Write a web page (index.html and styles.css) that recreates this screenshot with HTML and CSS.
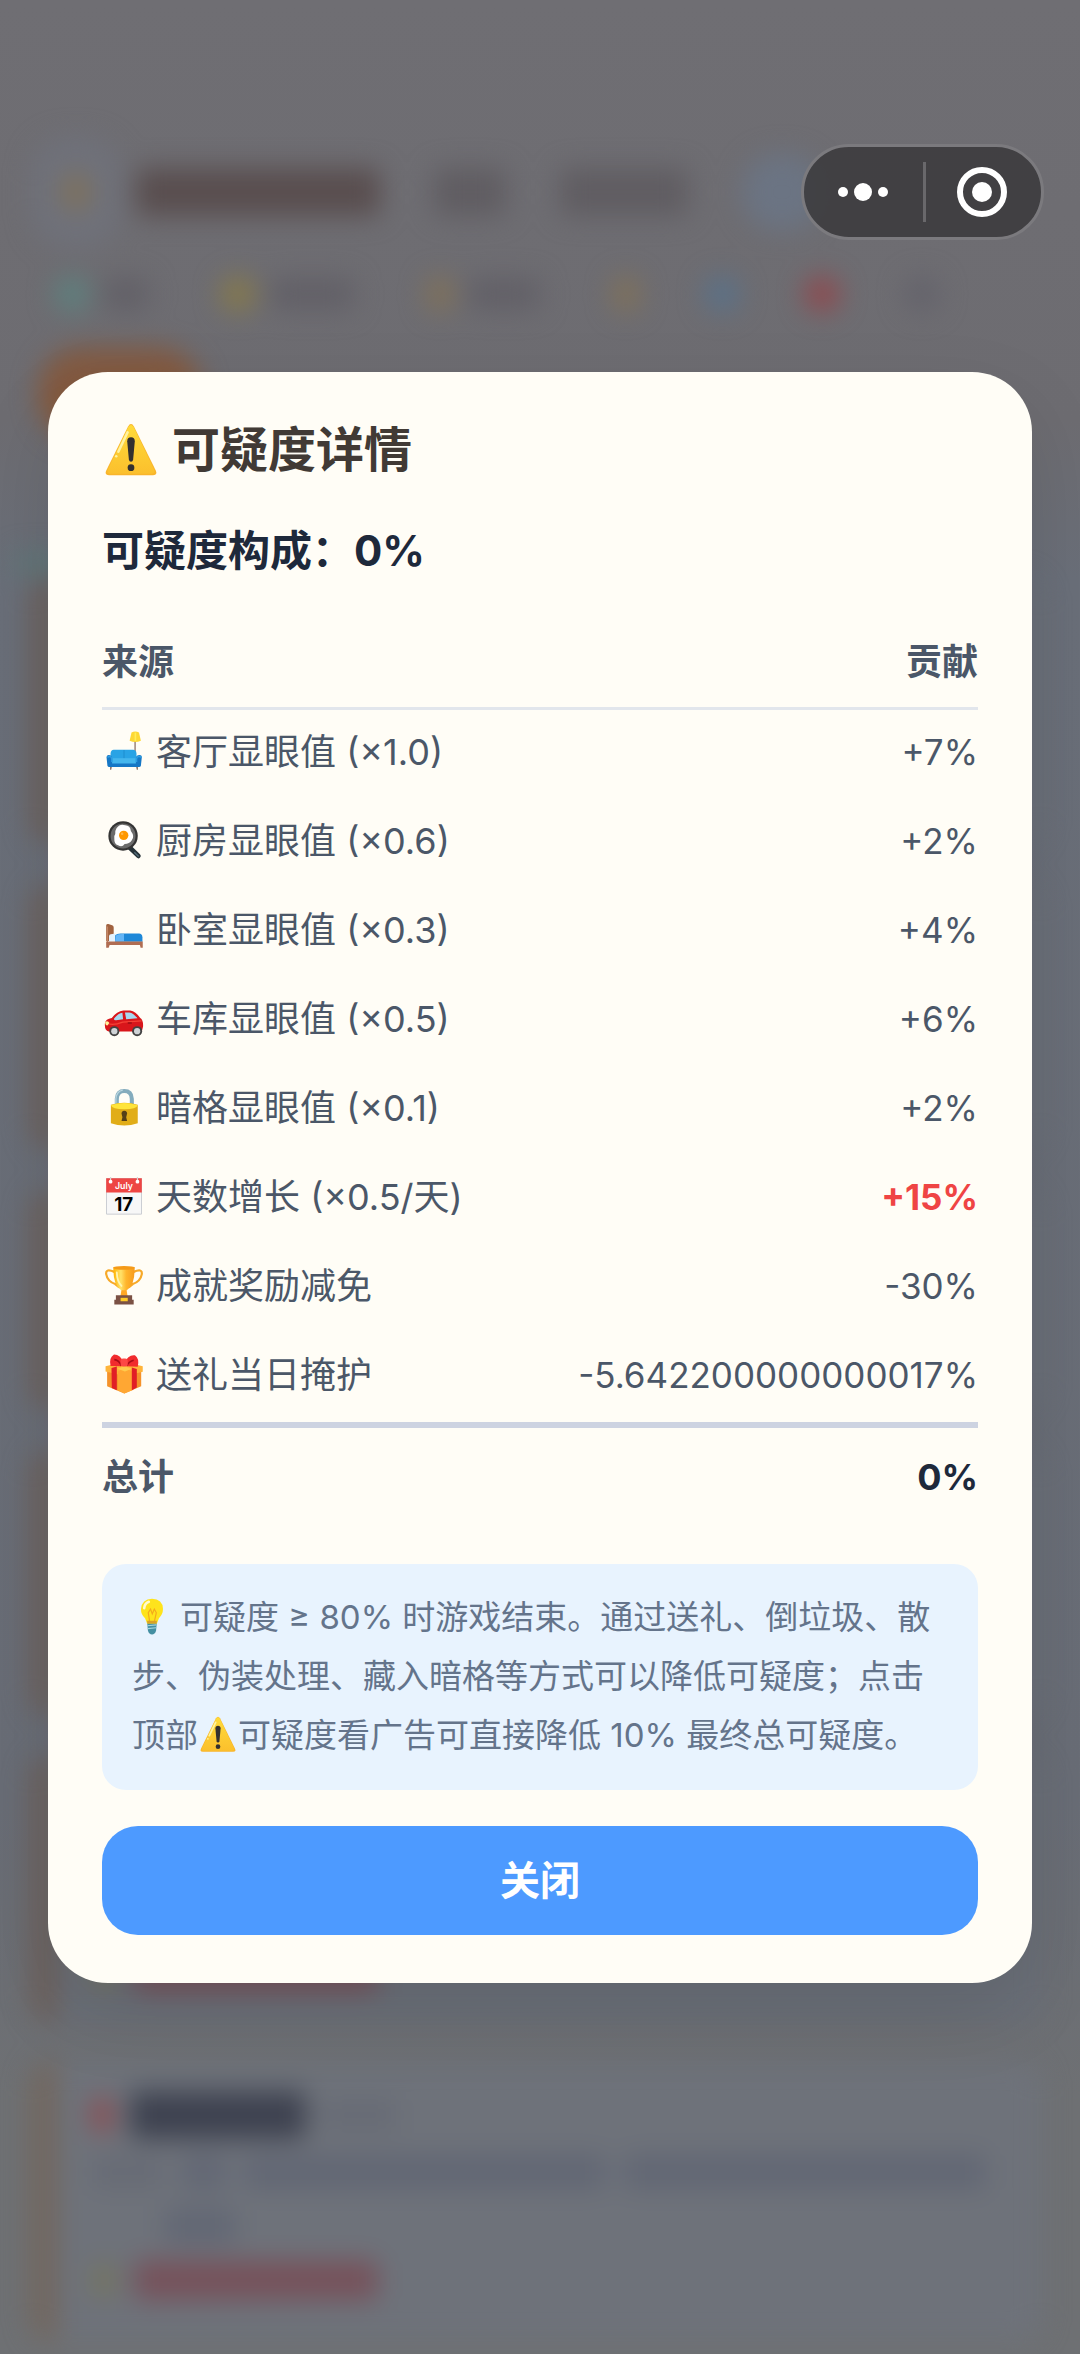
FILE: index.html
```html
<!DOCTYPE html>
<html lang="zh-CN">
<head>
<meta charset="utf-8">
<meta name="viewport" content="width=device-width, initial-scale=1">
<title>可疑度详情</title>
<link rel="stylesheet" href="styles.css">
</head>
<body>
<svg class="sprite" aria-hidden="true">
  <defs>
    <linearGradient id="gold" x1="0" y1="0" x2="0" y2="1"><stop offset="0" stop-color="#ffdb3a"/><stop offset="1" stop-color="#fbc02d"/></linearGradient>
    <linearGradient id="cup" x1="0" y1="0" x2="1" y2="0"><stop offset="0" stop-color="#ffb300"/><stop offset=".35" stop-color="#ffe26a"/><stop offset=".6" stop-color="#ffb62d"/><stop offset="1" stop-color="#f79a1c"/></linearGradient>
  </defs>
  <symbol id="warning" viewBox="0 0 128 128">
    <path d="M57 8Q64-3 71 8l52 105q4 11-7 11H12q-11 0-7-11z" fill="#f9b52b"/>
    <path d="M58 9Q64 0 70 9l49 102q3 9-6 9H14q-8 0-5-9z" fill="url(#gold)"/>
    <path d="M56 22 34 68" stroke="#fff3a0" stroke-width="6" stroke-linecap="round"/><circle cx="29" cy="79" r="3" fill="#fff3a0"/>
    <path d="M55 43q0-9 9-9t9 9l-4 44q-1 5-5 5t-5-5z" fill="#33302f"/><circle cx="64" cy="106" r="8" fill="#33302f"/>
  </symbol>
  <symbol id="sofa" viewBox="0 0 128 128">
    <path d="M97 28h5v50h-5z" fill="#a1887f"/><path d="M88 5q12-7 24 0l6 26q-18 8-36 0z" fill="#fdd835"/><path d="M98 5h5v27h-5z" fill="#ffee58"/>
    <path d="M20 112h5l-2 12h-3zM103 112h5v12h-3z" fill="#6d4c41"/>
    <path d="M21 72q1-12 10-12h62q10 0 11 12v28H21z" fill="#29a3e5"/><path d="M64 61v28" stroke="#1680c2" stroke-width="2"/>
    <path d="M25 87h79v24H25z" fill="#45b6ed"/><path d="M8 83q1-6 7-6 10 0 11 10v17h76V87q1-10 12-10 7 0 7 7l-3 27q-1 4-6 4H17q-5 0-6-4z" fill="#1677c5"/>
    <path d="M11 84q11-7 14 5v10M120 84q-12-7-16 5v10" fill="none" stroke="#2c9de2" stroke-width="5"/>
  </symbol>
  <symbol id="pan" viewBox="0 0 128 128">
    <path d="m78 84 32 31" stroke="#263238" stroke-width="15" stroke-linecap="round"/><path d="m97 103 14 14" stroke="#546e7a" stroke-width="4"/>
    <circle cx="61" cy="51" r="47" fill="#343434"/><circle cx="61" cy="51" r="40" fill="#6b6b6b"/><path d="M40 26Q52 10 68 17q16 1 18 18 13 17 3 30-8 12-23 12-8 12-21 4-13-4-12-21-2-9 3-15-1-12 4-19" fill="#fff"/>
    <circle cx="63" cy="49" r="15" fill="#ff9800"/><circle cx="58" cy="44" r="4" fill="#ffb74d"/>
  </symbol>
  <symbol id="bed" viewBox="0 0 128 128">
    <path d="M7 52q1-5 7-4l12 4q5 1 5 7v43H7z" fill="#a1623f"/><path d="M11 56v58" stroke="#c58563" stroke-width="4"/>
    <path d="M16 85q3-7 20-6l12 3v22H16z" fill="#e3f2fd"/><path d="M36 84q5-6 17-6h59q10 0 11 12v15H35z" fill="#1e88d8"/><path d="M39 84q8-5 25-4v24H35z" fill="#64b5f6"/>
    <path d="M7 104h117v20h-7l-2-9H18l-3 9H7z" fill="#b06d52"/>
  </symbol>
  <symbol id="car" viewBox="0 0 128 128">
    <path d="M3 81q2-14 22-17Q41 42 62 40h22q17 2 32 24 10 6 9 27l-4 16H15Q1 104 3 81z" fill="#d9161b"/>
    <path d="M32 66q13-17 27-19l2 21-22 3q-8 1-7-5zM67 46h14q14 2 26 19l-36 3z" fill="#a8d8ef"/><path d="M6 80q21 10 54-3l60-4" fill="none" stroke="#f44336" stroke-width="4"/>
    <path d="M4 76q9-5 13 4l-6 8q-8-1-7-12z" fill="#fff59d"/><path d="M76 80h13" stroke="#8d0c12" stroke-width="4"/>
    <circle cx="33" cy="106" r="16" fill="#424242"/><circle cx="106" cy="106" r="16" fill="#424242"/><circle cx="33" cy="106" r="10" fill="#cfd3d6"/><circle cx="106" cy="106" r="10" fill="#cfd3d6"/>
  </symbol>
  <symbol id="lock" viewBox="0 0 128 128">
    <path d="M41 67V38q1-25 24-25t24 25v29" fill="none" stroke="#84acbd" stroke-width="13"/><path d="M38 61V37Q41 13 60 10" fill="none" stroke="#b8d5df" stroke-width="4"/>
    <path d="M22 57q43-14 86 0v59q-43 14-86 0z" fill="#e1ad18"/><path d="M22 58q43-14 86 0-4 13-43 13T22 58z" fill="#ffe43a"/>
    <path d="M57 89a9 9 0 1 1 16 0l-2 8 3 12H56l3-12z" fill="#554018"/>
  </symbol>
  <symbol id="trophy" viewBox="0 0 128 128">
    <path d="M33 22Q5 10 7 29q4 23 29 32l13 11M95 22q28-12 26 7-4 23-29 32L79 72" fill="none" stroke="#f7a928" stroke-width="7"/>
    <path d="M57 73h14l5 30H52z" fill="#ffa726"/><path d="M30 8h68q1 58-25 73H55Q29 66 30 8z" fill="url(#cup)"/><ellipse cx="64" cy="9" rx="35" ry="6" fill="#f59a18"/><path d="M41 24q1 29 15 43" fill="none" stroke="#fff4b0" stroke-width="6" stroke-linecap="round"/>
    <path d="M38 97h52v14h5v15H33v-15h5z" fill="#7b5144"/><path d="M53 105h23v11H53z" fill="#ffca28"/>
  </symbol>
  <symbol id="gift" viewBox="0 0 128 128">
    <path d="m10 53 55-16 54 16v50l-54 23-55-23z" fill="#f5922a"/><path d="m5 39 59-14 60 14v18L67 70 5 56z" fill="#ffb43a"/><path d="m44 56 22-11 25 11v60l-26 10-21-10z" fill="#ffa733"/>
    <path d="m24 45 17-5v76l-16-7zM89 43l16 5v59l-16 9z" fill="#e11f26"/><path d="m43 47 22-8 24 8-22 9z" fill="#ffcb4d"/>
    <path d="M63 28Q52 1 31 2 15 12 21 38l34 1zM66 28Q77 1 99 4q15 10 9 37l-35-2z" fill="#f12b2d"/><path d="M33 18q14 1 23 20M95 20Q81 23 72 38" fill="none" stroke="#a90d15" stroke-width="5"/><rect x="53" y="14" width="23" height="26" rx="8" fill="#fc4845"/>
  </symbol>
  <symbol id="bulb" viewBox="0 0 128 128">
    <path d="M47 82h34l-3 31q-4 13-14 13t-14-13z" fill="#448fa2"/><path d="m48 96 31-3M49 106l29-3" stroke="#a4d5df" stroke-width="4"/>
    <path d="M64 3q37 1 38 35 0 18-14 32l-7 18H47l-7-18Q25 56 26 38 29 4 64 3z" fill="#fee31c"/><path d="M37 35q1-16 16-22" fill="none" stroke="#fffbd0" stroke-width="9" stroke-linecap="round"/>
    <path d="m56 82-5-31 8-13 6 17 7-17 7 13-7 31" fill="none" stroke="#f4a91c" stroke-width="4"/><path d="M47 79h34l-1 9H48z" fill="#d9a128"/>
  </symbol>
</svg>

<div class="backdrop" aria-hidden="true">
  <div class="bar bar-top">
    <span class="avatar"><i class="dot gold"></i></span>
    <i class="smear w-title brown"></i><i class="smear w-sm"></i><i class="smear w-md"></i><i class="pill-blue"></i>
  </div>
  <div class="bar bar-stats">
    <i class="dot teal"></i><i class="smear w-xs thin"></i>
    <i class="dot yellow push"></i><i class="smear w-lg thin"></i>
    <i class="dot gold push"></i><i class="smear w-sm thin"></i>
    <i class="dot gold push"></i><i class="dot blue push"></i><i class="dot red push"></i><i class="dot grey push"></i>
  </div>
  <div class="tab"></div>
  <div class="rule"></div>
  <div class="log">
    <div class="entry"></div>
    <div class="entry"></div>
    <div class="entry short"></div>
    <div class="entry"></div>
    <div class="entry end"><div class="line"><i class="dot olive"></i><i class="smear w-title rose"></i></div></div>
    <div class="entry light">
      <div class="line head"><i class="dot red slim"></i><i class="smear ink w-head"></i><i class="smear w-sm faint"></i></div>
      <div class="line"><i class="smear w-sm faint"></i><i class="smear slate w-xs"></i><i class="smear slate grow"></i><i class="smear slate grow"></i></div>
      <div class="line indent"><i class="smear slate w-sm"></i></div>
      <div class="line"><i class="dot olive"></i><i class="smear w-title rose"></i></div>
    </div>
  </div>
</div>

<main class="overlay">
  <section class="modal" role="dialog" aria-modal="true" aria-labelledby="dialog-title">
    <h1 class="title" id="dialog-title"><svg class="emoji"><use href="#warning"/></svg>可疑度详情</h1>
    <h2 class="subtitle">可疑度构成：0%</h2>
    <table class="sources">
      <thead><tr><th scope="col">来源</th><th scope="col">贡献</th></tr></thead>
      <tbody>
        <tr><td><svg class="emoji"><use href="#sofa"/></svg>客厅显眼值 (×1.0)</td><td>+7%</td></tr>
        <tr><td><svg class="emoji"><use href="#pan"/></svg>厨房显眼值 (×0.6)</td><td>+2%</td></tr>
        <tr><td><svg class="emoji"><use href="#bed"/></svg>卧室显眼值 (×0.3)</td><td>+4%</td></tr>
        <tr><td><svg class="emoji"><use href="#car"/></svg>车库显眼值 (×0.5)</td><td>+6%</td></tr>
        <tr><td><svg class="emoji"><use href="#lock"/></svg>暗格显眼值 (×0.1)</td><td>+2%</td></tr>
        <tr><td><svg class="emoji" viewBox="0 0 128 128"><path d="M8 8h112v114H8z" fill="#f7f7f7" stroke="#c8cbd0" stroke-width="3"/><path d="M7 7h114v46H7z" fill="#ee4644"/><path d="M21 3v13M107 3v13" stroke="#d6d6d6" stroke-width="4"/><circle cx="21" cy="18" r="6" fill="#fff"/><circle cx="107" cy="18" r="6" fill="#fff"/><text x="64" y="43" text-anchor="middle" class="cal-month">July</text><text x="63" y="111" text-anchor="middle" class="cal-day">17</text></svg>天数增长 (×0.5/天)</td><td class="high">+15%</td></tr>
        <tr><td><svg class="emoji"><use href="#trophy"/></svg>成就奖励减免</td><td>-30%</td></tr>
        <tr><td><svg class="emoji"><use href="#gift"/></svg>送礼当日掩护</td><td>-5.642200000000017%</td></tr>
      </tbody>
      <tfoot><tr><th scope="row">总计</th><td>0%</td></tr></tfoot>
    </table>
    <p class="note"><svg class="emoji lead"><use href="#bulb"/></svg>可疑度 ≥ 80% 时游戏结束。通过送礼、倒垃圾、散步、伪装处理、藏入暗格等方式可以降低可疑度；点击顶部<svg class="emoji"><use href="#warning"/></svg>可疑度看广告可直接降低 10% 最终总可疑度。</p>
    <button class="close" type="button">关闭</button>
  </section>
</main>

<div class="capsule">
  <button type="button" aria-label="更多"><svg viewBox="0 0 50 50"><circle cx="5" cy="25" r="5"/><circle cx="25" cy="25" r="9"/><circle cx="45" cy="25" r="5"/></svg></button>
  <button type="button" aria-label="退出"><svg viewBox="0 0 50 50"><circle cx="25" cy="25" r="22" class="ring"/><circle cx="25" cy="25" r="10"/></svg></button>
</div>
</body>
</html>
```
FILE: styles.css
```css
* { box-sizing: border-box; }

body {
  margin: 0;
  min-height: 100vh;
  position: relative;
  background: linear-gradient(#6f6e73 0, #6d6c71 420px, #6a6f79 580px, #696d76 1800px, #6e7073 2100px, #6e7073 100%);
  color: #4b5768;
  font-family: Inter, "Noto Sans CJK SC", sans-serif;
  font-size: 36px;
}

.sprite { position: absolute; width: 0; height: 0; }
.cal-month { font: 600 28px Inter, sans-serif; fill: #fff; }
.cal-day { font: 700 60px Inter, sans-serif; fill: #000; }

/* Game screen behind the dialog, out of focus */
.backdrop {
  position: absolute;
  inset: 0;
  overflow: hidden;
  padding-top: 135px;
  filter: blur(13px);
}
.bar { display: flex; align-items: center; padding: 0 32px; }
.bar-top { height: 114px; gap: 54px; }
.bar-stats { height: 90px; gap: 14px; padding-left: 54px; }
.avatar { display: flex; align-items: center; justify-content: center; width: 88px; height: 110px; margin-right: -38px; border-radius: 36px; background: #6f717a; }
.smear { display: block; height: 48px; border-radius: 8px; background: #605d62; }
.thin { height: 32px; background: #626067; }
.brown { background: #594e4f; }
.rose { background: #76525b; height: 40px; }
.ink { background: #3e4250; }
.slate { background: #626774; height: 36px; }
.faint { background: #676b75; height: 32px; }
.w-xs { width: 44px; }
.w-sm { width: 72px; }
.w-md { width: 128px; }
.w-lg { width: 84px; }
.w-head { width: 176px; }
.w-title { width: 244px; }
.grow { flex: 1; }
.pill-blue { width: 80px; height: 76px; border-radius: 36px; background: #6b7483; }
.dot { display: block; flex: none; width: 36px; height: 36px; border-radius: 18px; }
.push { margin-left: 58px; }
.slim { width: 20px; }
.gold { width: 28px; background: #807159; }
.teal { background: #5e807e; }
.yellow { background: #85794c; }
.blue { background: #5a7188; }
.dot + .dot.push { margin-left: 50px; }
.red { background: #8e4a4f; }
.grey { background: #64636b; }
.olive { width: 24px; background: #75745f; }
.tab { width: 164px; height: 94px; margin: 8px 0 0 38px; border-radius: 44px; background: linear-gradient(#815a43, #87593a); }
.rule { width: 50%; height: 20px; margin: 112px 0 0 14px; background: #5f7778; }
.log { display: flex; flex-direction: column; gap: 38px; padding: 4px 38px 0 30px; }
.entry { height: 268px; padding: 24px 56px 24px 34px; border-radius: 24px; border-left: 28px solid #6c615d; background: #6a6f78; }
.entry.short { height: 222px; }
.entry.end { display: flex; flex-direction: column; justify-content: flex-end; }
.entry.light { height: 280px; background: #6e727a; border-left-color: #72675f; }
.line { display: flex; align-items: center; gap: 18px; height: 54px; }
.head { height: 60px; }
.indent { padding-left: 72px; }

/* Dialog */
.overlay {
  position: relative;
  display: flex;
  align-items: center;
  min-height: 100vh;
  padding: 48px;
}
.modal {
  flex: 1;
  padding: 50px 54px 48px;
  border-radius: 60px;
  background: #fffdf6;
  box-shadow: 0 30px 80px rgba(0, 0, 0, 0.1);
}
.emoji { width: 44px; height: 40px; vertical-align: -6px; }
.title {
  display: flex;
  align-items: center;
  gap: 12px;
  margin: 0 0 48px;
  color: #413a35;
  font-size: 48px;
  line-height: 56px;
}
.title .emoji { width: 58px; height: 54px; }
.subtitle { margin: 0 0 41px; color: #1e293b; font-size: 42px; line-height: 50px; }

.sources { width: 100%; border-collapse: separate; border-spacing: 0; line-height: 48px; }
.sources th, .sources td { height: 89px; padding: 0 0 4px; text-align: left; }
.sources tr > :last-child { text-align: right; }
.sources tbody td:last-child { font-size: 35px; }
.sources thead th { height: 93px; padding: 0; border-bottom: 3px solid #e2e6ec; }
.sources td .emoji { margin-right: 10px; }
.sources .high { color: #ef4444; font-weight: 700; }
.sources tfoot th, .sources tfoot td { height: 108px; padding-bottom: 4px; border-top: 6px solid #cdd3e1; }
.sources tfoot td { color: #1e293b; font-weight: 700; }

.note {
  margin: 34px 0 36px;
  padding: 24px 30px 25px;
  border-radius: 24px;
  background: #e8f3fe;
  color: #64748b;
  font-size: 33px;
  line-height: 59px;
}
.note .emoji { width: 40px; height: 37px; }
.note .lead { margin-right: 8px; }

.close {
  display: block;
  width: 100%;
  height: 109px;
  padding: 0 0 4px;
  border: 0;
  border-radius: 36px;
  background: #4d9aff;
  color: #fff;
  font: inherit;
  font-size: 40px;
  font-weight: 700;
}

/* Host app controls floating over the page */
.capsule {
  position: absolute;
  top: 144px;
  right: 36px;
  display: flex;
  width: 243px;
  height: 96px;
  border: 3px solid #7b7a7e;
  border-radius: 48px;
  background: rgba(58, 57, 59, 0.86);
}
.capsule button {
  position: relative;
  flex: 1;
  display: flex;
  align-items: center;
  justify-content: center;
  padding: 0;
  border: 0;
  background: none;
}
.capsule button + button::before {
  content: "";
  position: absolute;
  left: 0;
  height: 60px;
  border-left: 3px solid #69686b;
}
.capsule svg { width: 50px; height: 50px; fill: #fff; }
.capsule .ring { fill: none; stroke: #fff; stroke-width: 6; }
```
